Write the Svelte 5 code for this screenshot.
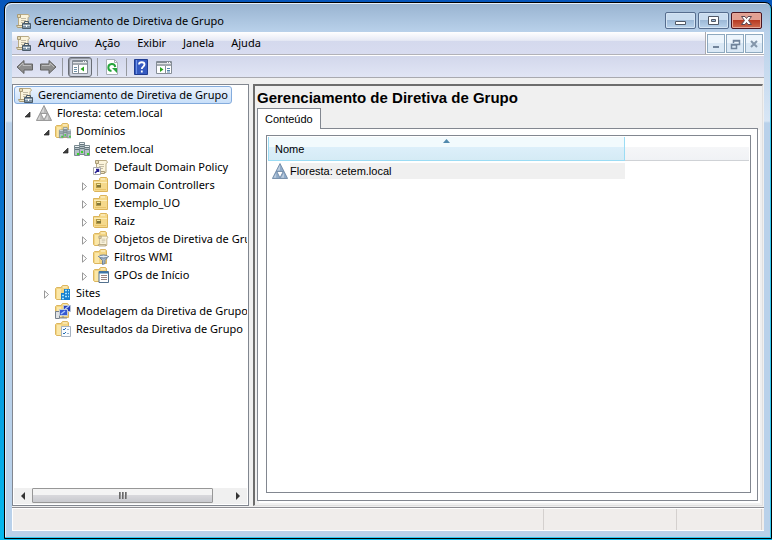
<script>
  const menus = ['Arquivo', 'Ação', 'Exibir', 'Janela', 'Ajuda'];

  const tree = [
    {
      label: 'Gerenciamento de Diretiva de Grupo', icon: 'console', selected: true,
      children: [
        {
          label: 'Floresta: cetem.local', icon: 'forest', state: 'open',
          children: [
            {
              label: 'Domínios', icon: 'domains', state: 'open',
              children: [
                {
                  label: 'cetem.local', icon: 'domain', state: 'open',
                  children: [
                    { label: 'Default Domain Policy', icon: 'link' },
                    { label: 'Domain Controllers', icon: 'ou', state: 'closed' },
                    { label: 'Exemplo_UO', icon: 'ou', state: 'closed' },
                    { label: 'Raiz', icon: 'ou', state: 'closed' },
                    { label: 'Objetos de Diretiva de Grupo', icon: 'objects', state: 'closed' },
                    { label: 'Filtros WMI', icon: 'filter', state: 'closed' },
                    { label: 'GPOs de Início', icon: 'starter', state: 'closed' }
                  ]
                }
              ]
            },
            { label: 'Sites', icon: 'sites', state: 'closed' },
            { label: 'Modelagem da Diretiva de Grupo', icon: 'modeling' },
            { label: 'Resultados da Diretiva de Grupo', icon: 'results' }
          ]
        }
      ]
    }
  ];
</script>

{#snippet folder()}
  <path d="M.5 3.500 1.500 2.500H6.500V1.500L7.500.5H12.500L13.500 1.500V14.500H1.500L.5 13.500Z" fill="#f3d583" stroke="#dcb660" />
  <path d="M2 4H6V14H2Z" fill="#fbe7a8" />
  <path d="M8 2H12" stroke="#fff6d8" />
{/snippet}

{#snippet scroll()}
  <path d="M4.500 1.500H13.500L14.500 3.500 13 4.500V13.500H3.500V4.500Z" fill="#fbf4dc" stroke="#b9ab86" />
  <path d="M2.500 1.500H5.500V4.500H2.500Z" fill="#e6d9b4" stroke="#a99b76" />
  <path d="M1.500 12.500H11.500V14.500H2.500Z" fill="#eee3c4" stroke="#a99b76" />
  <path d="M6 5.500H11M6 7.500H11M6 9.500H10" stroke="#c3bba4" />
{/snippet}

{#snippet servers()}
  <path d="M5.500 1.500H10.500V13.500H5.500Z" fill="#b2bec3" stroke="#7b8b92" />
  <path d="M.5 4.500H5.500V14.500H.5ZM10.500 4.500H15.500V14.500H10.500Z" fill="#b5c2c7" stroke="#7b8b92" />
  <path d="M6 3.500H10M6 5.500H10M1 6.500H5M1 8.500H5M11 6.500H15M11 8.500H15M6 7.500H10" stroke="#65767e" />
  <path d="M6 2.500H10M1 5.500H5M11 5.500H15" stroke="#edf3f5" />
  <path d="M3 12H5V14H3ZM7 10H9V12H7ZM13 12H15V14H13Z" fill="#38d32c" />
{/snippet}

{#snippet icon(name)}
  <svg class="icon" viewBox="0 0 16 16" aria-hidden="true">
    {#if name === 'console'}
      {@render scroll()}
      <path d="M7.500 10.500H15.500V15.500H7.500Z" fill="#7e93a4" stroke="#4b5b69" />
      <path d="M9.500 10V8.500H13.500V10" fill="none" stroke="#4b5b69" />
      <path d="M8 12.500H15" stroke="#c8d4dd" />
      <path d="M11 12H12V14H11Z" fill="#fff" />
    {:else if name === 'forest' || name === 'forest-blue'}
      <g fill={name === 'forest' ? '#b9b9b9' : '#8fabc9'} stroke={name === 'forest' ? '#8a8a8a' : '#6782a0'} stroke-width=".8" stroke-linejoin="round">
        <path d="M8 .5 15.600 15.500H.4Z" />
        <path d="M4.800 8.500H11.200L8 14.800Z" fill="#fff" />
      </g>
      <path d="M8 2V7.500H5ZM4.200 10V14.800H1.500ZM12 10V14.800H9Z" fill="#fff" opacity=".4" />
    {:else if name === 'domains'}
      {@render folder()}
      <g transform="translate(4 3.500) scale(.78)">{@render servers()}</g>
    {:else if name === 'domain'}
      {@render servers()}
    {:else if name === 'link'}
      {@render scroll()}
      <path d="M.5 8.500H7.500V15.500H.5Z" fill="#fff" stroke="#aaa" />
      <path d="M2 14 5.500 10.500M3 10.500H5.500V13" fill="none" stroke="#251d91" stroke-width="1.500" />
    {:else if name === 'ou'}
      <path d="M.5 3.500H6.500V1.500L7.500.5H13.500L14.500 1.500V14.500H1.500L.5 13.500Z" fill="#f5d98b" stroke="#dcb45a" />
      <path d="M1 5.500H14" stroke="#fcedb8" />
      <path d="M8 2H12" stroke="#fff6d8" />
      <path d="M3 6H8V11H3Z" fill="#b79c45" />
      <path d="M4 7H7V8H4Z" fill="#f6e79b" />
      <path d="M4 8H8V10H4Z" fill="#82763c" />
      <path d="M2 12.500H13" stroke="#e9c46c" />
    {:else if name === 'objects'}
      {@render folder()}
      <g transform="translate(4 4) scale(.76)">{@render scroll()}</g>
    {:else if name === 'filter'}
      {@render folder()}
      <path d="M5.500 7.500H15.500L12 11.500V14.500L9.500 15.500V11.500Z" fill="#a5b6c8" stroke="#6f8297" />
      <ellipse cx="10.500" cy="7.500" rx="4.500" ry="1.500" fill="#e3edf6" stroke="#677c94" />
    {:else if name === 'starter'}
      {@render folder()}
      <path d="M6 4.500H15.500V15.500H6Z" fill="#fff" stroke="#53718e" />
      <path d="M6 5.500H15" stroke="#3d77a9" stroke-width="2" />
      <path d="M8 8.500H14M8 10.500H14M8 12.500H14" stroke="#9a8480" />
    {:else if name === 'sites'}
      {@render folder()}
      <path d="M9 4H15V15H9ZM6 8H9V15H6Z" fill="#1680ce" />
      <path d="M10 5.500H12M13 5.500H14M10 8.500H12M13 8.500H14M7 10.500H9M10 11.500H12M13 11.500H14M7 13.500H9" stroke="#a6e4ff" stroke-width="1.500" />
    {:else if name === 'modeling'}
      {@render folder()}
      <path d="M.5 8.500H4.500V15.500H.5Z" fill="#e0e3e6" stroke="#77818d" />
      <path d="M8.500 2.500H15.500V8.500H8.500Z" fill="#273eb7" stroke="#b8c2d2" />
      <path d="M4.500 6.500H12.500V12.500H4.500Z" fill="#3659d1" stroke="#c3ccd7" />
      <path d="M6 11 10 8M10 6 14 3" stroke="#a8c5ff" stroke-width="1.500" />
      <path d="M8 13V15M5 15H12" stroke="#7e8792" />
    {:else if name === 'results'}
      {@render folder()}
      <path d="M6.500 5.500H15.500V15.500H6.500Z" fill="#f8fbff" stroke="#a5b1c0" />
      <path d="m8 8 1 1 2-2m-3 5 1 1 2-2" fill="none" stroke="#236db1" />
      <path d="M12 8.500H14M12 12.500H14" stroke="#9ab5cf" />
    {/if}
  </svg>
{/snippet}

{#snippet branch(nodes)}
  {#each nodes as node}
    <li role="treeitem" aria-selected={!!node.selected} aria-expanded={node.children ? true : undefined}>
      <div class="node">
        <span class="twisty">
          {#if node.state === 'open'}
            <svg viewBox="0 0 9 9" aria-hidden="true"><path d="M7 2V7H2Z" fill="#404040" stroke="#222" stroke-width=".7" /></svg>
          {:else if node.state === 'closed'}
            <svg viewBox="0 0 9 9" aria-hidden="true"><path d="M2.500 .8V8.200L6.500 4.500Z" fill="#fff" stroke="#989898" /></svg>
          {/if}
        </span>
        <span class="item" class:selected={node.selected}>{@render icon(node.icon)}<span>{node.label}</span></span>
      </div>
      {#if node.children}
        <ul role="group">{@render branch(node.children)}</ul>
      {/if}
    </li>
  {/each}
{/snippet}

{#snippet bigArrow()}
  <svg class="arrow" viewBox="0 0 18 16" aria-hidden="true">
    <path d="M1 8 8 1.500V5H16.500V11H8V14.500Z" fill="#8e8e8e" stroke="#636363" />
    <path d="M3 8 7 4V6.500H15" fill="none" stroke="#bdbdbd" />
  </svg>
{/snippet}

<div class="desktop">
  <main class="window">
    <header class="titlebar">
      {@render icon('console')}
      <h1>Gerenciamento de Diretiva de Grupo</h1>
      <div class="controls">
        <button aria-label="Minimizar"><svg viewBox="0 0 29 15"><path d="M9.500 8.500H19.500V11.500H9.500Z" fill="#fff" stroke="#505866" /></svg></button>
        <button aria-label="Maximizar"><svg viewBox="0 0 29 15"><path d="M9.500 3.500H19.500V11.500H9.500ZM12.500 6.500V8.500H16.500V6.500Z" fill="#fff" fill-rule="evenodd" stroke="#505866" /></svg></button>
        <button class="close" aria-label="Fechar"><svg viewBox="0 0 29 15"><path d="M9.500 3.500H13L14.500 5.500 16 3.500H19.500L16.500 7.500 19.500 11.500H16L14.500 9.500 13 11.500H9.500L12.500 7.500Z" fill="#fff" stroke="#5c4650" /></svg></button>
      </div>
    </header>

    <div class="client">
      <div class="menubar">
        {@render icon('console')}
        <nav aria-label="Menu">
          {#each menus as menu}<button>{menu}</button>{/each}
        </nav>
        <div class="mdi">
          <button aria-label="Minimizar janela"><svg viewBox="0 0 16 16"><path d="M5 11H11" stroke="#71849a" stroke-width="2" /></svg></button>
          <button aria-label="Restaurar janela"><svg viewBox="0 0 16 16"><path d="M6.500 7V4.500H12.500V8.500H10M6 5H13M4.500 8.500H9.500V12.500H4.500ZM4 9H10" fill="none" stroke="#71849a" stroke-width="1.500" /></svg></button>
          <button aria-label="Fechar janela"><svg viewBox="0 0 16 16"><path d="m5 5 6 6m0-6-6 6" stroke="#8496aa" stroke-width="2" /></svg></button>
        </div>
      </div>

      <div class="toolbar">
        <button class="tool" aria-label="Voltar">{@render bigArrow()}</button>
        <button class="tool forward" aria-label="Avançar">{@render bigArrow()}</button>
        <span class="rule"></span>
        <button class="tool pressed" aria-label="Mostrar árvore">
          <svg viewBox="0 0 16 16"><path d="M.5 1.500H15.500V14.500H.5Z" fill="#fff" stroke="#858d96" /><path d="M1 2.500H15M1 5H15" stroke="#858d96" stroke-width="1.500" /><path d="M11 2H12V3H11ZM13 2H14V3H13Z" fill="#fff" /><path d="M6.500 6V14" stroke="#858d96" /><path d="M2 8.500H5M2 10.500H5M2 12.500H5" stroke="#6e91a8" /><path d="M12 7.500V12.500L8.500 10Z" fill="#29a51d" /></svg>
        </button>
        <span class="rule"></span>
        <button class="tool" aria-label="Atualizar">
          <svg viewBox="0 0 16 16"><path d="M2.500.5H10.500L13.500 3.500V15.500H2.500Z" fill="#fff" stroke="#a9b0b8" /><path d="M10.500.5V3.500H13.500" fill="none" stroke="#a9b0b8" /><path d="M7.500 12A3.500 3.500 0 1 1 11.300 8" fill="none" stroke="#26a53c" stroke-width="2" /><path d="M8 9H13V14Z" fill="#26a53c" /></svg>
        </button>
        <span class="rule"></span>
        <button class="tool" aria-label="Ajuda">
          <svg viewBox="0 0 16 16"><path d="M1.500.5H14.500V15.500H1.500Z" fill="#3459c0" stroke="#203c91" /><path d="M3.500 1V15" stroke="#6f92e5" /><path d="M6 5.500C6 2.500 11.500 2.500 11.500 5.500 11.500 7.500 8.800 7.700 8.800 10M8.800 11.500V13.500" fill="none" stroke="#fff" stroke-width="1.800" /></svg>
        </button>
        <button class="tool" aria-label="Painel de ações">
          <svg viewBox="0 0 16 16"><path d="M.5 2.500H15.500V14.500H.5Z" fill="#fff" stroke="#858d96" /><path d="M1 3.500H15M1 6H15" stroke="#858d96" stroke-width="1.500" /><path d="M11 3H12V4H11ZM13 3H14V4H13Z" fill="#fff" /><path d="M9.500 7V14" stroke="#858d96" /><path d="M11 9.500H14M11 11.500H14M11 13H14" stroke="#5285ad" /><path d="M4 8V13L7.500 10.500Z" fill="#29a51d" /></svg>
        </button>
      </div>

      <div class="panes">
        <section class="sidebar" aria-label="Árvore do console">
          <ul class="tree" role="tree">{@render branch(tree)}</ul>
          <div class="scrollbar">
            <button aria-label="Rolar para a esquerda"><svg viewBox="0 0 8 8"><path d="M6 0V8L2 4Z" fill="#333" /></svg></button>
            <div class="track"><div class="thumb"><i></i><i></i><i></i></div></div>
            <button aria-label="Rolar para a direita"><svg viewBox="0 0 8 8"><path d="M2 0V8L6 4Z" fill="#333" /></svg></button>
          </div>
        </section>

        <section class="details">
          <h2>Gerenciamento de Diretiva de Grupo</h2>
          <div role="tablist"><button class="tab" role="tab" aria-selected="true">Conteúdo</button></div>
          <div class="panel" role="tabpanel">
            <div class="list">
              <table>
                <thead>
                  <tr>
                    <th class="name" scope="col">Nome<svg class="sort" viewBox="0 0 7 4" aria-hidden="true"><path d="M0 4 3.500 0 7 4Z" fill="#5189ad" /></svg></th>
                    <td class="rest"></td>
                  </tr>
                </thead>
                <tbody>
                  <tr><td><div class="entry">{@render icon('forest-blue')}<span>Floresta: cetem.local</span></div></td><td></td></tr>
                </tbody>
              </table>
            </div>
          </div>
        </section>
      </div>

      <footer class="status"><span></span><span></span><span></span></footer>
    </div>
  </main>
</div>

<style>
  :global(body) { margin: 0; }
  .desktop, .desktop * { box-sizing: border-box; }
  .desktop {
    display: flex;
    min-height: 100vh;
    padding: 2px 0 1px 4px;
    background: linear-gradient(#0656bb, #0767c8 30%, #0796dd 65%, #05b9ee);
    font: 11px/18px "Noto Sans", "Open Sans", sans-serif;
    color: #000;
  }
  button { margin: 0; padding: 0; border: 0; background: none; font: inherit; color: inherit; }
  svg { display: block; }
  ul { margin: 0; padding: 0; list-style: none; }
  .icon { flex: none; width: 16px; height: 16px; }

  .window {
    display: flex;
    flex: 1;
    flex-direction: column;
    min-width: 0;
    padding: 1px 7px 7px;
    border: 1px solid #000;
    border-radius: 7px 7px 0 0;
    background: linear-gradient(#98b3d0, #b9d1ea 29px, #d8e6f5 118px, #b9d1ea 120px);
    box-shadow: inset -1px -1px #35c8ee, inset 1px 1px #e4effa;
  }
  .titlebar { display: flex; align-items: center; gap: 3px; height: 28px; padding: 5px 2px 0 3px; }
  .titlebar h1 { flex: 1; margin: 0; font-size: 11px; font-weight: 400; line-height: 18px; }
  .controls { display: flex; align-self: flex-start; gap: 2px; padding-top: 3px; }
  .controls button {
    width: 31px;
    height: 17px;
    border: 1px solid #566d8e;
    border-radius: 2px;
    background: linear-gradient(#c9dcef 45%, #9db9d7 50%, #b9d3ec);
    box-shadow: inset 0 0 0 1px #d4e4f4;
  }
  .controls .close { border-color: #4b1420; background: linear-gradient(#e2a093 45%, #b83b23 50%, #cf6b50); box-shadow: inset 0 0 0 1px #e5a799; }

  .client { display: flex; flex: 1; flex-direction: column; min-width: 0; background: #f0f0f0; }
  .menubar {
    display: flex;
    align-items: center;
    height: 23px;
    padding-left: 3px;
    border-bottom: 1px solid #b2b2b8;
    background: linear-gradient(#fff, #e7eaf5 38%, #d4d9ed 42%, #d8dcf0);
  }
  .menubar nav { display: flex; flex: 1; gap: 17px; padding-left: 7px; }
  .mdi { display: flex; align-self: stretch; align-items: center; gap: 1px; padding: 0 1px; border-left: 1px solid #a9a9af; background: #fff; }
  .mdi button { width: 18px; height: 19px; padding: 1px 0; border: 1px solid #8ea9bf; background: linear-gradient(#edf5fc 45%, #dae8f5 50%); }
  .mdi svg { width: 16px; height: 16px; }
  .toolbar {
    display: flex;
    align-items: center;
    gap: 5px;
    height: 23px;
    padding-left: 4px;
    border-top: 1px solid #fff;
    border-bottom: 1px solid #a9a9af;
    background: linear-gradient(#d2d7eb, #e1e5f5);
  }
  .tool { display: flex; flex: none; align-items: center; justify-content: center; width: 18px; height: 20px; }
  .tool svg { width: 16px; height: 16px; }
  .tool .arrow { width: 18px; }
  .forward svg { transform: scaleX(-1); }
  .pressed { width: 24px; border: 1px solid #686c74; border-radius: 3px; background: #d0d5e2; box-shadow: inset 1px 1px 1px #8d929c; }
  .rule { width: 1px; height: 18px; background: #96999f; }

  .panes { display: flex; flex: 1; gap: 4px; min-height: 0; padding: 6px 1px 1px 0; border-bottom: 1px solid #8e8e93; }
  .sidebar { display: flex; flex: 0 0 237px; flex-direction: column; padding: 1px; border: 1px solid #828790; background: #fff; overflow: hidden; }
  .tree { flex: 1; overflow: hidden; white-space: nowrap; }
  .tree ul { padding-left: 19px; }
  .tree > li { margin-left: -12px; }
  .node { display: flex; align-items: center; height: 18px; }
  .twisty { display: flex; flex: none; justify-content: center; width: 12px; padding-top: 2px; }
  .twisty svg { width: 9px; height: 9px; }
  .item { display: flex; align-items: center; gap: 5px; height: 18px; padding: 0 3px 0 2px; border: 1px solid transparent; border-radius: 3px; }
  .selected { border-color: #84acdd; background: linear-gradient(#edf4fd, #c8dff9); }
  .scrollbar { display: flex; height: 16px; background: #f0f0f0; }
  .scrollbar button { display: flex; align-items: center; justify-content: center; width: 18px; }
  .scrollbar svg { width: 8px; height: 8px; }
  .track { flex: 1; }
  .thumb {
    display: flex;
    align-items: center;
    justify-content: center;
    gap: 1px;
    width: 92%;
    height: 15px;
    border: 1px solid #979797;
    border-radius: 1px;
    background: linear-gradient(#f4f4f4 45%, #d8d8dc 50%, #c9cacf);
  }
  .thumb i { width: 2px; height: 7px; background: linear-gradient(90deg, #555, #aaa); }

  .details {
    display: flex;
    flex: 1;
    flex-direction: column;
    min-width: 0;
    padding: 2px 4px 4px 2px;
    border: 2px solid #6d6d6d;
    border-right: 1px solid #e0e0e0;
    border-bottom: 1px solid #e0e0e0;
    font: 11px/16px "Liberation Sans", Arial, sans-serif;
  }
  h2 { margin: 0; font-size: 15px; line-height: 20px; }
  [role="tablist"] { display: flex; }
  .tab { height: 21px; margin-bottom: -1px; padding: 0 7px; border: 1px solid #828790; border-bottom: 0; background: #fff; z-index: 1; }
  .panel { display: flex; flex: 1; padding: 6px 6px 7px 8px; border: 1px solid #828790; background: #fff; box-shadow: 2px 2px #fff; }
  .list { flex: 1; padding: 1px; border: 1px solid #828790; }
  table { width: 100%; border-collapse: separate; border-spacing: 0; table-layout: fixed; }
  th, td { padding: 0; text-align: left; font-weight: 400; }
  th { position: relative; }
  .name { width: 74.3%; height: 24px; padding-left: 6px; border: 1px solid #9bdcf4; border-top: 0; background: linear-gradient(#f2fafd 42%, #dceffa 45%, #d5ebf5); }
  .sort { position: absolute; top: 2px; left: 50%; width: 7px; height: 4px; margin-left: -4px; }
  .rest { border-bottom: 1px solid #cfd2d6; background: linear-gradient(#fff 42%, #f5f6f8 45%, #f0f2f5); }
  .entry { display: flex; align-items: center; gap: 2px; height: 18px; margin-top: 1px; padding-left: 4px; }
  .entry span { flex: 1; background: #f0f0f0; }

  .status { display: flex; height: 23px; border: solid #fff; border-width: 1px 0 1px 1px; background: #f0edeb; }
  .status span { border-right: 1px solid #d4d0ce; }
  .status span:nth-child(1) { flex: 1; }
  .status span:nth-child(2) { width: 133px; }
  .status span:nth-child(3) { width: 85px; margin-right: 2px; }
</style>
